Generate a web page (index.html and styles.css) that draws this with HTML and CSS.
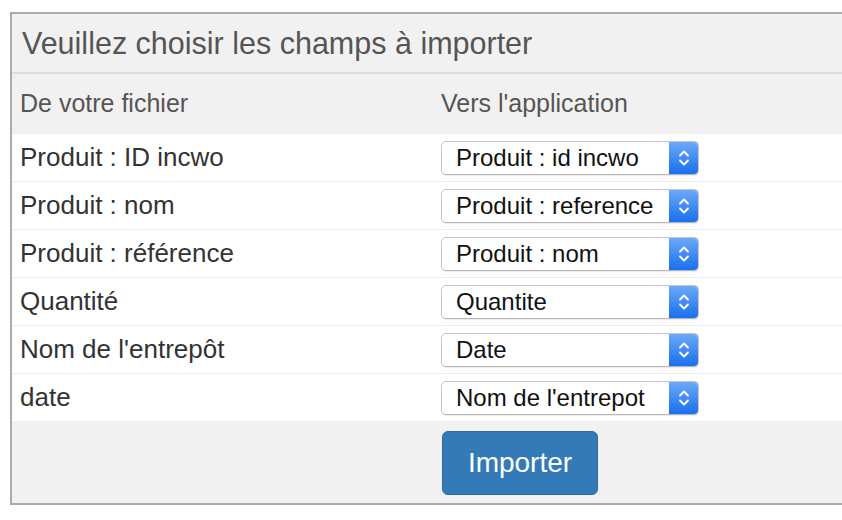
FILE: index.html
```html
<!DOCTYPE html>
<html lang="fr">
<head>
<meta charset="utf-8">
<title>Import</title>
<link rel="stylesheet" href="styles.css">
</head>
<body>
<div class="page">
  <div class="panel">
    <div class="panel-title">Veuillez choisir les champs à importer</div>
    <div class="grid">
      <div class="row head">
        <div class="cell">De votre fichier</div>
        <div class="cell">Vers l'application</div>
      </div>
      <div class="row">
        <div class="cell">Produit : ID incwo</div>
        <div class="cell"><div class="select"><span class="val">Produit : id incwo</span><span class="stepper"><svg width="12" height="22" viewBox="0 0 12 22"><path d="M2 8.5 L6 4.5 L10 8.5 M2 13.5 L6 17.5 L10 13.5" fill="none" stroke="#fff" stroke-width="1.8" stroke-linecap="round" stroke-linejoin="round"/></svg></span></div></div>
      </div>
      <div class="row">
        <div class="cell">Produit : nom</div>
        <div class="cell"><div class="select"><span class="val">Produit : reference</span><span class="stepper"><svg width="12" height="22" viewBox="0 0 12 22"><path d="M2 8.5 L6 4.5 L10 8.5 M2 13.5 L6 17.5 L10 13.5" fill="none" stroke="#fff" stroke-width="1.8" stroke-linecap="round" stroke-linejoin="round"/></svg></span></div></div>
      </div>
      <div class="row">
        <div class="cell">Produit : référence</div>
        <div class="cell"><div class="select"><span class="val">Produit : nom</span><span class="stepper"><svg width="12" height="22" viewBox="0 0 12 22"><path d="M2 8.5 L6 4.5 L10 8.5 M2 13.5 L6 17.5 L10 13.5" fill="none" stroke="#fff" stroke-width="1.8" stroke-linecap="round" stroke-linejoin="round"/></svg></span></div></div>
      </div>
      <div class="row">
        <div class="cell">Quantité</div>
        <div class="cell"><div class="select"><span class="val">Quantite</span><span class="stepper"><svg width="12" height="22" viewBox="0 0 12 22"><path d="M2 8.5 L6 4.5 L10 8.5 M2 13.5 L6 17.5 L10 13.5" fill="none" stroke="#fff" stroke-width="1.8" stroke-linecap="round" stroke-linejoin="round"/></svg></span></div></div>
      </div>
      <div class="row">
        <div class="cell">Nom de l'entrepôt</div>
        <div class="cell"><div class="select"><span class="val">Date</span><span class="stepper"><svg width="12" height="22" viewBox="0 0 12 22"><path d="M2 8.5 L6 4.5 L10 8.5 M2 13.5 L6 17.5 L10 13.5" fill="none" stroke="#fff" stroke-width="1.8" stroke-linecap="round" stroke-linejoin="round"/></svg></span></div></div>
      </div>
      <div class="row">
        <div class="cell">date</div>
        <div class="cell"><div class="select"><span class="val">Nom de l'entrepot</span><span class="stepper"><svg width="12" height="22" viewBox="0 0 12 22"><path d="M2 8.5 L6 4.5 L10 8.5 M2 13.5 L6 17.5 L10 13.5" fill="none" stroke="#fff" stroke-width="1.8" stroke-linecap="round" stroke-linejoin="round"/></svg></span></div></div>
      </div>
      <div class="row foot">
        <div class="cell"></div>
        <div class="cell"><button class="btn" type="button">Importer</button></div>
      </div>
    </div>
  </div>
</div>
</body>
</html>
```
FILE: styles.css
```css
html, body {
  margin: 0;
  padding: 0;
  background: #fff;
  overflow: hidden;
}
body {
  font-family: "Liberation Sans", Arial, Helvetica, sans-serif;
}
.page {
  padding: 12px 0 0 10px;
  width: 832px;
  overflow: hidden;
}
.panel {
  width: 860px;
  border: 2px solid #aaaaaa;
  background: #f1f1f1;
}
.panel-title {
  height: 60px;
  box-sizing: border-box;
  padding: 0 0 0 10px;
  display: flex;
  align-items: center;
  font-size: 30.5px;
  color: #555;
  border-bottom: 2px solid #dddddd;
}
.grid {
  display: flex;
  flex-direction: column;
}
.row {
  display: grid;
  grid-template-columns: 421px 1fr;
  height: 48px;
  background: #fff;
  border-top: 1px solid #eeeeee;
  box-sizing: border-box;
}
.cell {
  padding: 0 8px;
  display: flex;
  align-items: center;
  font-size: 26px;
  color: #333;
}
.row.head {
  height: 59px;
  background: #f1f1f1;
  border-top: none;
}
.row.head .cell {
  font-size: 25px;
  color: #555;
}
.row.foot {
  height: 82px;
  background: #f1f1f1;
}
.row.foot .cell {
  align-items: flex-start;
  padding-top: 9px;
}
.select {
  width: 258px;
  height: 34px;
  box-sizing: border-box;
  display: flex;
  align-items: stretch;
  border: 1px solid #c6c6c6;
  border-bottom-color: #b5b5b5;
  border-radius: 5px;
  background: #fff;
  box-shadow: 0 1px 1px rgba(0,0,0,0.08);
  overflow: hidden;
  margin-top: 1px;
}
.val {
  flex: 1;
  display: flex;
  align-items: center;
  padding-left: 14px;
  font-size: 24px;
  color: #111;
}
.stepper {
  width: 29px;
  display: flex;
  align-items: center;
  justify-content: center;
  background: linear-gradient(#6aaaf8, #1a6ff0);
}
.btn {
  width: 156px;
  height: 64px;
  margin-left: 1px;
  border: 1px solid #2e6da4;
  border-radius: 6px;
  background: #337ab7;
  color: #fff;
  font-family: "Liberation Sans", Arial, Helvetica, sans-serif;
  font-size: 28px;
  padding: 0;
}
```
